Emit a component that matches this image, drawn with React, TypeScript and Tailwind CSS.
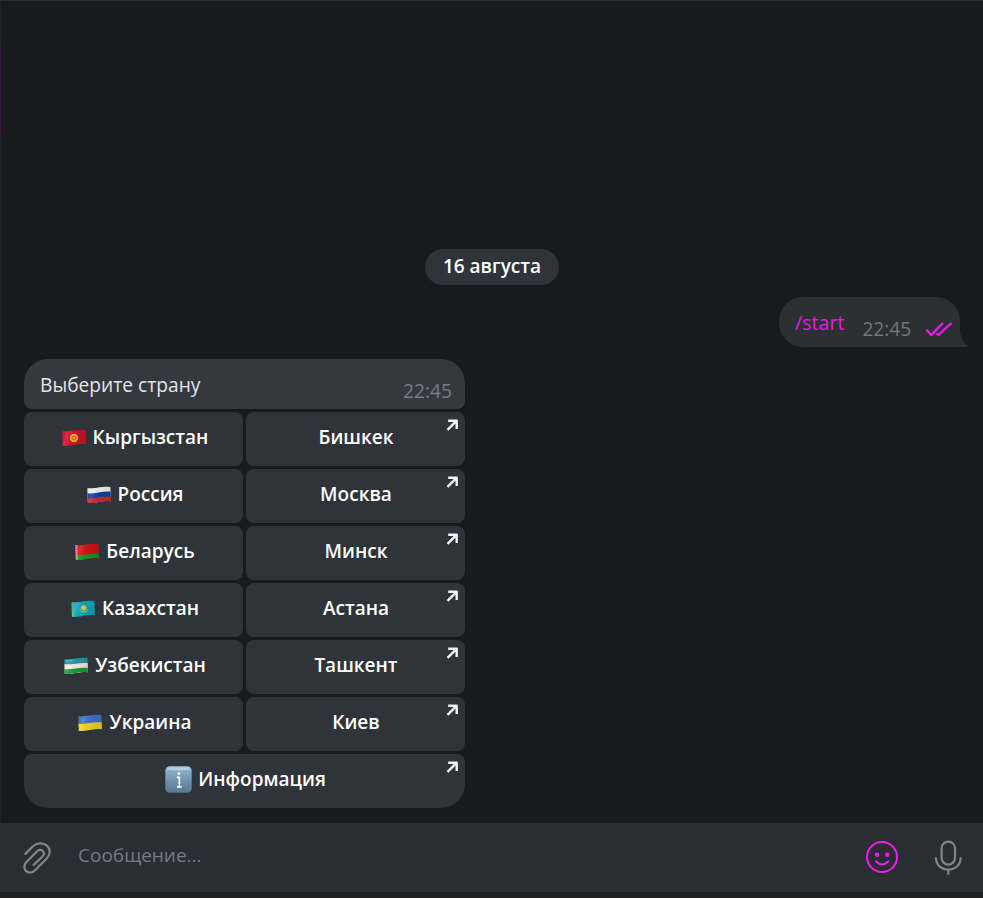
import { ReactNode } from 'react';
import clsx from 'clsx';

type FlagName = 'kg' | 'ru' | 'by' | 'kz' | 'uz' | 'ua';

interface Country {
  flag: FlagName;
  name: string;
  city: string;
}

const countries: Country[] = [
  { flag: 'kg', name: 'Кыргызстан', city: 'Бишкек' },
  { flag: 'ru', name: 'Россия', city: 'Москва' },
  { flag: 'by', name: 'Беларусь', city: 'Минск' },
  { flag: 'kz', name: 'Казахстан', city: 'Астана' },
  { flag: 'uz', name: 'Узбекистан', city: 'Ташкент' },
  { flag: 'ua', name: 'Украина', city: 'Киев' },
];

const flagArt: Record<FlagName, ReactNode> = {
  kg: (
    <>
      <rect width="24" height="18" fill="#d3122b" />
      <circle cx="12" cy="9" r="4.2" fill="#f5b52c" />
      <circle cx="12" cy="9" r="1.8" fill="none" stroke="#d9541f" strokeWidth="0.9" />
    </>
  ),
  ru: (
    <>
      <rect width="24" height="18" fill="#f2f2f2" />
      <path d="M0 7.3C8 8 15 4.700 24 5.600V18H0z" fill="#1540a8" />
      <path d="M0 12.300C8 13 15 9.700 24 10.600V18H0z" fill="#d0272d" />
    </>
  ),
  by: (
    <>
      <rect width="24" height="18" fill="#d51218" />
      <path d="M0 12.300C8 13 15 10 24 11V18H0z" fill="#119a22" />
      <rect width="2.400" height="18" fill="#e4b3b0" />
      <path d="M1.200 1v16" stroke="#c9252b" strokeWidth="1.200" strokeDasharray="1.200 1.200" />
    </>
  ),
  kz: (
    <>
      <rect width="24" height="18" fill="#12a9ba" />
      <path d="M2 1.500v15" stroke="#8fb36a" strokeWidth="1" />
      <circle cx="12.700" cy="7.800" r="2.600" fill="#e9cf3f" />
      <path d="M8.600 9.500q4 5 8.200 0" fill="none" stroke="#cfc64a" strokeWidth="1.100" />
    </>
  ),
  uz: (
    <>
      <rect width="24" height="18" fill="#1a9dae" />
      <path d="M0 6.600C8 7.300 15 4.700 24 5.600V18H0z" fill="#c4484d" />
      <path d="M0 7.200C8 7.900 15 5.200 24 6.100V18H0z" fill="#f0f0f0" />
      <path d="M0 12.200C8 12.900 15 10.100 24 11V18H0z" fill="#1d9e35" />
      <circle cx="3.200" cy="4" r="0.800" fill="#a5d8de" />
      <path d="M5.500 3.500h3" stroke="#6fbfc8" strokeWidth="0.700" />
    </>
  ),
  ua: (
    <>
      <rect width="24" height="18" fill="#3f74cc" />
      <path d="M0 9.800C8 10.500 15 7.500 24 8.400V18H0z" fill="#f5d51c" />
    </>
  ),
};

const Flag = ({ name }: { name: FlagName }) => (
  <svg className="h-[18px] w-6 shrink-0" viewBox="0 0 24 18">
    <defs>
      <clipPath id={`wave-${name}`}>
        <path d="M.3 2.300C5 2.600 9 1.800 12.500 1.200 16.500.4 20 .5 23.400 1.100L23.900 15.300C20 14.700 16.500 15 13 15.800 9 16.700 5 17.200 .8 16.700z" />
      </clipPath>
      <linearGradient id={`shade-${name}`} x1="0" x2="1" y1="0" y2="0.200">
        <stop offset="0" stopColor="#000" stopOpacity="0.050" />
        <stop offset="0.250" stopColor="#fff" stopOpacity="0.120" />
        <stop offset="0.600" stopColor="#000" stopOpacity="0.060" />
        <stop offset="1" stopColor="#000" stopOpacity="0.120" />
      </linearGradient>
    </defs>
    <g clipPath={`url(#wave-${name})`}>
      {flagArt[name]}
      <rect width="24" height="18" fill={`url(#shade-${name})`} />
    </g>
  </svg>
);

const InfoBadge = () => (
  <svg className="h-[27px] w-[27px] shrink-0" viewBox="0 0 27 27">
    <defs>
      <linearGradient id="info-fill" x1="0" x2="0" y1="0" y2="1">
        <stop offset="0" stopColor="#9cbdd8" />
        <stop offset="0.200" stopColor="#87a9c6" />
        <stop offset="1" stopColor="#567692" />
      </linearGradient>
    </defs>
    <rect x="0.300" y="0.300" width="26.400" height="26.400" rx="4.500" fill="url(#info-fill)" />
    <path d="M3.500 1.200h20l1.800 2.600q-12 1.500-23.600 0z" fill="#c2d6e6" opacity="0.750" />
    <circle cx="13.900" cy="7.600" r="1.500" fill="#fff" />
    <path d="M11.800 11.300h2.500v9M12 20.900h4.500" fill="none" stroke="#fff" strokeWidth="1.700" />
  </svg>
);

const LinkArrow = () => (
  <svg
    className="absolute top-[7px] right-[7px] h-3 w-3"
    viewBox="0 0 12 12"
    fill="none"
    stroke="#f2f3f4"
    strokeWidth="2.400"
    strokeLinejoin="round"
  >
    <path d="M2.200 1.700h8.500v8.300M10.300 2.100L1.500 10.800" />
  </svg>
);

interface KeyboardButtonProps {
  children: ReactNode;
  external?: boolean;
  className?: string;
}

const KeyboardButton = ({ children, external, className }: KeyboardButtonProps) => (
  <button
    className={clsx(
      'relative flex h-[54px] items-center justify-center rounded-lg bg-[#2f343a] pb-[3px] text-[19px] font-semibold text-white',
      className
    )}
  >
    {children}
    {external && <LinkArrow />}
  </button>
);

const Composer = () => (
  <footer className="flex h-[69px] items-center bg-[#2a2e34]">
    <svg
      className="mt-px ml-[23px] h-8 w-7 shrink-0"
      viewBox="0 0 28 32"
      fill="none"
      stroke="#828486"
      strokeWidth="2.200"
      strokeLinecap="round"
      strokeLinejoin="round"
    >
      <path d="M2.300 11.900L10 4.300C13.500.8 20 .1 23.900 3.600 27.700 7 27.500 12.500 24.200 15.900L12.700 27.800C9.500 31.200 5.500 31.300 3 28.900 .6 26.500.9 22.600 3.700 19.800L13.700 9.700C15.600 7.800 18.100 7.500 19.800 9 21.400 10.500 21.300 12.700 19.500 14.500L10.700 22.900" />
    </svg>
    <input
      className="ml-[27px] min-w-0 flex-1 bg-transparent pb-1 text-[19px] text-[#747b82] outline-none placeholder:text-[#747b82]"
      placeholder="Сообщение..."
    />
    <svg className="mb-px h-8 w-8 shrink-0" viewBox="0 0 32 32" fill="none" stroke="#f21cee" strokeWidth="2">
      <circle cx="16" cy="16" r="15" />
      <circle cx="11" cy="13.700" r="2.200" fill="#f21cee" stroke="none" />
      <circle cx="21.300" cy="13.700" r="2.200" fill="#f21cee" stroke="none" />
      <path d="M10 20.300q6.200 6.600 12.400 0" strokeLinecap="round" />
    </svg>
    <svg
      className="mr-[21px] ml-9 h-9 w-7 shrink-0"
      viewBox="0 0 28 36"
      fill="none"
      stroke="#828486"
      strokeWidth="2.200"
      strokeLinecap="round"
    >
      <rect x="7.600" y="1.600" width="13.400" height="23" rx="6.700" />
      <path d="M2 18C2 24.500 7 29.500 14.300 29.500S26.600 24.500 26.600 18M14.300 29.500v4.500" />
    </svg>
  </footer>
);

const App = () => {
  return (
    <div className="flex h-[898px] w-[983px] flex-col overflow-hidden border-t border-[#292e34] bg-[#191a1d] font-['Open_Sans','Noto_Sans',sans-serif] text-[19.2px] leading-[27px]">
      <main className="relative flex flex-1 flex-col pt-[248px]">
        {/* Edge of the chat list selection */}
        <div className="absolute top-0 left-0 h-full w-px bg-[#202226]"></div>
        <div className="absolute top-[42px] left-0 h-[93px] w-px bg-[#460f48]"></div>

        <div className="ml-[425px] flex h-9 w-[134px] items-center justify-center rounded-full bg-[#2f343b] pb-px text-[19px] font-semibold text-white">
          16 августа
        </div>

        {/* Outgoing message */}
        <div className="relative mt-3 mr-[23px] flex h-[50px] w-[181px] self-end rounded-[24px] rounded-br-none bg-[#2c3033] pl-4">
          <span className="mt-3 text-[19.6px] text-[#e51be2]">/start</span>
          <span className="mt-[18px] ml-[18px] text-[#71767a]">22:45</span>
          <svg
            className="mt-[24px] ml-[14px] h-4 w-7"
            viewBox="0 0 28 16"
            fill="none"
            stroke="#e51be2"
            strokeWidth="2.400"
            strokeLinecap="round"
            strokeLinejoin="round"
          >
            <path d="M2 9.300l4.300 4.500L17.300 2.600M12.300 13.300l1.200.5L25.700 2.600" />
          </svg>
          <svg className="absolute right-[-9px] bottom-0 h-[18px] w-[9px]" viewBox="0 0 9 18" fill="#2c3033">
            <path d="M0 0C0 8 2.500 14 8.500 16.500 9.300 17 9 18 8 18H0z" />
          </svg>
        </div>

        {/* Bot message with its inline keyboard */}
        <div className="mt-3 ml-6 w-[441px]">
          <div className="flex h-[50px] justify-between rounded-t-[24px] rounded-b-lg bg-[#35393f] pr-[13px] pl-4">
            <span className="mt-3 text-[#e3e4e5]">Выберите страну</span>
            <span className="mt-[18px] text-[#777c81]">22:45</span>
          </div>
          <div className="mt-[3px] grid grid-cols-2 gap-[3px]">
            {countries.map((country) => (
              <div key={country.flag} className="contents">
                <KeyboardButton className="gap-[7px] pl-[3px]">
                  <Flag name={country.flag} />
                  {country.name}
                </KeyboardButton>
                <KeyboardButton external className="pl-px">
                  {country.city}
                </KeyboardButton>
              </div>
            ))}
            <KeyboardButton external className="col-span-2 gap-[6px] rounded-b-[24px] pl-[2px]">
              <InfoBadge />
              Информация
            </KeyboardButton>
          </div>
        </div>
      </main>

      <Composer />
      <div className="h-[6px] bg-[#222122]"></div>
    </div>
  );
};

export default App;
